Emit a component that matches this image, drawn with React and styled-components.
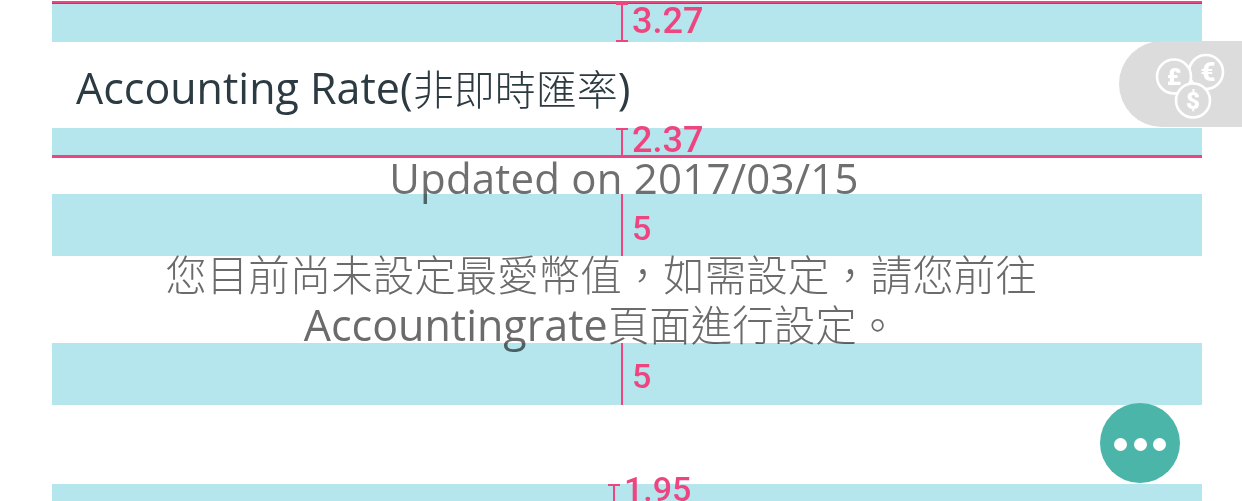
import React from "react";
import styled, { createGlobalStyle } from "styled-components";

const GlobalStyle = createGlobalStyle`
  html, body {
    margin: 0;
    padding: 0;
    background: #ffffff;
    overflow: hidden;
  }
  body {
    font-family: "Open Sans", "Noto Sans CJK TC", sans-serif;
    font-weight: 300;
  }
`;

function CoinsIcon() {
  return (
    <CoinsSvg viewBox="0 0 72 66" fill="none">
      <g stroke="#fff" strokeWidth="2.6" fill="#dcdcdc">
        <circle cx="51" cy="21" r="17" />
        <circle cx="19" cy="25.5" r="17" />
        <circle cx="38" cy="49.5" r="17" />
      </g>
      <g fill="#fff" fontFamily="Roboto, sans-serif" fontWeight="900" textAnchor="middle">
        <text x="53" y="30" fontSize="26">€</text>
        <text x="19" y="34" fontSize="24">£</text>
        <text x="38" y="58" fontSize="24">$</text>
      </g>
    </CoinsSvg>
  );
}

function Gap({ height, value, cap, left, top, small }) {
  return (
    <Band $height={height}>
      <Marker $cap={cap} $left={left} />
      <Label $left={left} $top={top} $small={small}>{value}</Label>
    </Band>
  );
}

export default function App() {
  return (
    <Page>
      <GlobalStyle />
      <PinkLine />
      <Gap height={39} value="3.27" cap="both" top={0} />
      <Title>
        <Latin>Accounting Rate(</Latin>非即時匯率<Latin>)</Latin>
      </Title>
      <Gap height={29} value="2.37" cap="top" top={-6} />
      <PinkLine />
      <Updated>Updated on 2017/03/15</Updated>
      <Gap height={62} value="5" small top={17} />
      <Message>
        您目前尚未設定最愛幣值，如需設定，請您前往
        <br />
        <Latin>Accountingrate</Latin>頁面進行設定。
      </Message>
      <Gap height={62} value="5" small top={16} />
      <Blank />
      <Gap height={17} value="1.95" cap="top" left={-8} top={-12} small />
      <CurrencyTab>
        <CoinsIcon />
      </CurrencyTab>
      <MoreButton aria-label="more">
        <Dot />
        <Dot />
        <Dot />
      </MoreButton>
    </Page>
  );
}

const Page = styled.div`
  position: relative;
  width: 1242px;
  height: 501px;
  box-sizing: border-box;
  padding: 3px 40px 0 52px;
  overflow: hidden;
  background: #ffffff;
`;

const PinkLine = styled.div`
  height: 3px;
  margin: -2px 0 -1px;
  background: #ee4581;
  position: relative;
`;

const Band = styled.div`
  position: relative;
  height: ${(p) => p.$height}px;

  &::before {
    content: "";
    position: absolute;
    inset: 0;
    background: #b5e5ed;
    mix-blend-mode: multiply;
  }
`;

const Marker = styled.div`
  position: absolute;
  top: 0;
  bottom: 0;
  left: ${(p) => 569 + (p.$left || 0)}px;
  width: 2px;
  background: #ee4581;

  &::before,
  &::after {
    content: "";
    position: absolute;
    left: -5px;
    width: 12px;
    height: 2px;
    background: #ee4581;
  }
  &::before {
    top: 0;
    display: ${(p) => (p.$cap ? "block" : "none")};
  }
  &::after {
    bottom: 0;
    display: ${(p) => (p.$cap === "both" ? "block" : "none")};
  }
`;

const Label = styled.span`
  position: absolute;
  left: ${(p) => 580 + (p.$left || 0)}px;
  top: ${(p) => p.$top}px;
  font-family: Roboto, sans-serif;
  font-size: ${(p) => (p.$small ? 34 : 36)}px;
  font-weight: 500;
  line-height: 1;
  color: #ee4581;
  white-space: nowrap;
`;

const Latin = styled.span`
  font-size: 43px;
  font-weight: 400;
`;

const Title = styled.div`
  box-sizing: border-box;
  height: 86px;
  padding: 4px 0 0 24px;
  display: flex;
  align-items: center;
  font-size: 41px;
  color: #2c3a42;
  white-space: pre;
`;

const Updated = styled.div`
  height: 37px;
  padding-right: 6px;
  line-height: 42px;
  text-align: center;
  font-size: 42px;
  font-weight: 400;
  letter-spacing: 0.2px;
  color: #6f6f6f;
  white-space: nowrap;
`;

const Message = styled.div`
  height: 93px;
  margin-top: -6px;
  padding-right: 52px;
  text-align: center;
  font-size: 41.5px;
  line-height: 50px;
  color: #6b6b6b;
`;

const Blank = styled.div`
  height: 79px;
`;

const CurrencyTab = styled.div`
  position: absolute;
  top: 41px;
  right: 0;
  width: 123px;
  height: 86px;
  border-radius: 43px 0 0 43px;
  background: #dcdcdc;
  display: flex;
  align-items: center;
  padding-left: 36px;
  box-sizing: border-box;
`;

const CoinsSvg = styled.svg`
  width: 72px;
  height: 66px;
  overflow: visible;
`;

const MoreButton = styled.button`
  position: absolute;
  left: 1100px;
  top: 403px;
  width: 80px;
  height: 80px;
  border: none;
  padding: 2px 0 0;
  border-radius: 50%;
  background: #4bb5aa;
  display: flex;
  align-items: center;
  justify-content: center;
  gap: 6.5px;
`;

const Dot = styled.span`
  width: 13px;
  height: 13px;
  border-radius: 50%;
  background: #ffffff;
`;
